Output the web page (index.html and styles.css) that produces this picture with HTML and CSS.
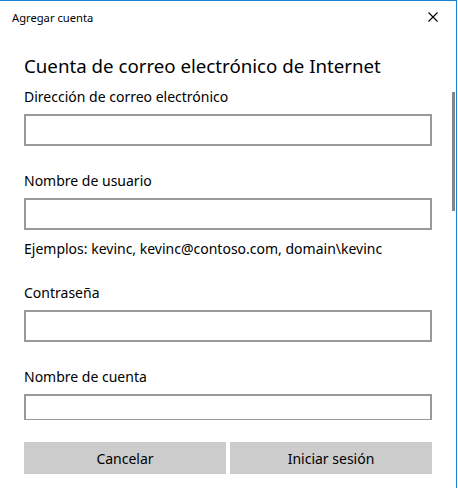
FILE: index.html
```html
<!DOCTYPE html>
<html lang="es">
<head>
    <meta charset="UTF-8">
    <title>Agregar cuenta</title>
    <link rel="stylesheet" href="styles.css">
</head>
<body>

    <div class="window">
        <div class="title-bar">
            <span class="title">Agregar cuenta</span>
            <button class="close-btn" title="Cerrar">
                <svg width="10" height="10" viewBox="0 0 10 10">
                    <path d="M0.5 0.5 L9.5 9.5 M9.5 0.5 L0.5 9.5" stroke="#000" stroke-width="1.1" fill="none"/>
                </svg>
            </button>
        </div>

        <div class="scroll-area">
            <div class="content">
                <h1>Cuenta de correo electrónico de Internet</h1>

                <div class="field">
                    <label>Dirección de correo electrónico</label>
                    <input type="text">
                </div>

                <div class="field">
                    <label>Nombre de usuario</label>
                    <input type="text">
                </div>
                <div class="hint">Ejemplos: kevinc, kevinc@contoso.com, domain\kevinc</div>

                <div class="field">
                    <label>Contraseña</label>
                    <input type="password">
                </div>

                <div class="field">
                    <label>Nombre de cuenta</label>
                    <input type="text" class="short">
                </div>
            </div>
            <div class="scrollbar"></div>
        </div>

        <div class="footer">
            <button class="action-btn">Cancelar</button>
            <button class="action-btn">Iniciar sesión</button>
        </div>
    </div>

</body>
</html>
```

FILE: styles.css
```css
html, body {
    margin: 0;
    padding: 0;
    background: #fff;
}

body {
    font-family: "Noto Sans", "Open Sans", sans-serif;
    color: #000;
}

.window {
    width: 456px;
    height: 487px;
    border-top: 1px solid #1883d7;
    border-right: 1px solid #1883d7;
    display: flex;
    flex-direction: column;
}

.title-bar {
    height: 32px;
    display: flex;
    justify-content: space-between;
    align-items: center;
    padding-left: 12px;
    flex-shrink: 0;
}

.title {
    font-size: 11.2px;
    color: #000;
}

.close-btn {
    width: 46px;
    height: 32px;
    border: none;
    background: transparent;
    padding: 0;
    display: flex;
    align-items: center;
    justify-content: center;
}

.scroll-area {
    position: relative;
    height: 387px;
    overflow: hidden;
    flex-shrink: 0;
}

.content {
    padding: 19px 0 0 24px;
    width: 408px;
}

h1 {
    font-size: 18.7px;
    font-weight: normal;
    line-height: 28px;
    margin: 0 0 7px 0;
}

.field {
    display: flex;
    flex-direction: column;
    gap: 7px;
    margin-bottom: 25px;
}

label {
    font-size: 14px;
    line-height: 20px;
}

input {
    height: 32px;
    box-sizing: border-box;
    border: 2px solid #999;
    margin: 0;
    padding: 0 8px;
    font-family: inherit;
    font-size: 14px;
    outline: none;
}

input.short {
    height: 27px;
}

.hint {
    font-size: 14px;
    line-height: 20px;
    margin: -16px 0 24px 0;
}

.scrollbar {
    position: absolute;
    left: 452px;
    top: 59px;
    width: 3px;
    height: 119px;
    background: #868686;
}

.footer {
    display: flex;
    gap: 4px;
    padding: 22px 0 0 24px;
}

.action-btn {
    width: 202px;
    height: 32px;
    border: none;
    background: #cccccc;
    color: #000;
    font-family: inherit;
    font-size: 14px;
    padding: 0;
}
```
